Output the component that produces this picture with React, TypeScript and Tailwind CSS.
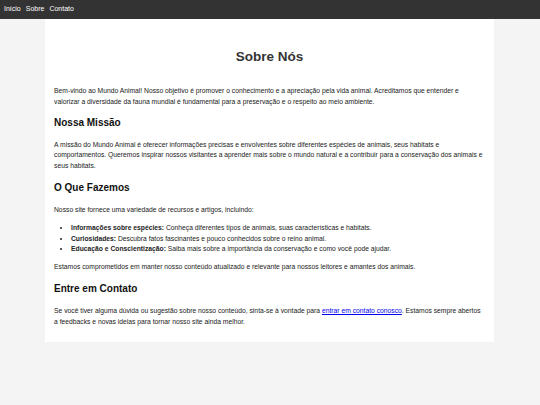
export default function App() {
  return (
    <div className="min-h-[405px] bg-[#f4f4f4] text-[#333] font-['Liberation_Sans',Arial,sans-serif]">
      <nav className="h-[19px] bg-[#333] flex items-center px-[4px] gap-[5px] text-[7px] text-white">
        <a href="#" className="text-white">Início</a>
        <a href="#" className="text-white">Sobre</a>
        <a href="#" className="text-white">Contato</a>
      </nav>
      <main className="mx-[45px] w-[449px] bg-white px-[9px] pt-[29px] pb-[14px] text-[6.75px] leading-[10.8px] text-[#222]">
        <h1 className="text-center text-[13.5px] leading-[17px] font-bold text-[#333] mb-[21px]">Sobre Nós</h1>
        <p className="mb-[7px]">
          Bem-vindo ao Mundo Animal! Nosso objetivo é promover o conhecimento e a apreciação pela vida animal. Acreditamos que entender e valorizar a diversidade da fauna mundial é fundamental para a preservação e o respeito ao meio ambiente.
        </p>
        <h2 className="text-[10px] leading-[13px] font-bold text-[#111] mt-[8px] mb-[11px]">Nossa Missão</h2>
        <p className="mb-[7px]">
          A missão do Mundo Animal é oferecer informações precisas e envolventes sobre diferentes espécies de animais, seus habitats e comportamentos. Queremos inspirar nossos visitantes a aprender mais sobre o mundo natural e a contribuir para a conservação dos animais e seus habitats.
        </p>
        <h2 className="text-[10px] leading-[13px] font-bold text-[#111] mt-[9px] mb-[11px]">O Que Fazemos</h2>
        <p className="mb-[7px]">Nosso site fornece uma variedade de recursos e artigos, incluindo:</p>
        <ul className="list-disc pl-[17px] mb-[7px]">
          <li><strong>Informações sobre espécies:</strong> Conheça diferentes tipos de animais, suas características e habitats.</li>
          <li><strong>Curiosidades:</strong> Descubra fatos fascinantes e pouco conhecidos sobre o reino animal.</li>
          <li><strong>Educação e Conscientização:</strong> Saiba mais sobre a importância da conservação e como você pode ajudar.</li>
        </ul>
        <p className="mb-[7px]">Estamos comprometidos em manter nosso conteúdo atualizado e relevante para nossos leitores e amantes dos animais.</p>
        <h2 className="text-[10px] leading-[13px] font-bold text-[#111] mt-[9px] mb-[11px]">Entre em Contato</h2>
        <p>
          Se você tiver alguma dúvida ou sugestão sobre nosso conteúdo, sinta-se à vontade para <a href="#" className="text-[#00e] underline">entrar em contato conosco</a>. Estamos sempre abertos a feedbacks e novas ideias para tornar nosso site ainda melhor.
        </p>
      </main>
    </div>
  );
}
